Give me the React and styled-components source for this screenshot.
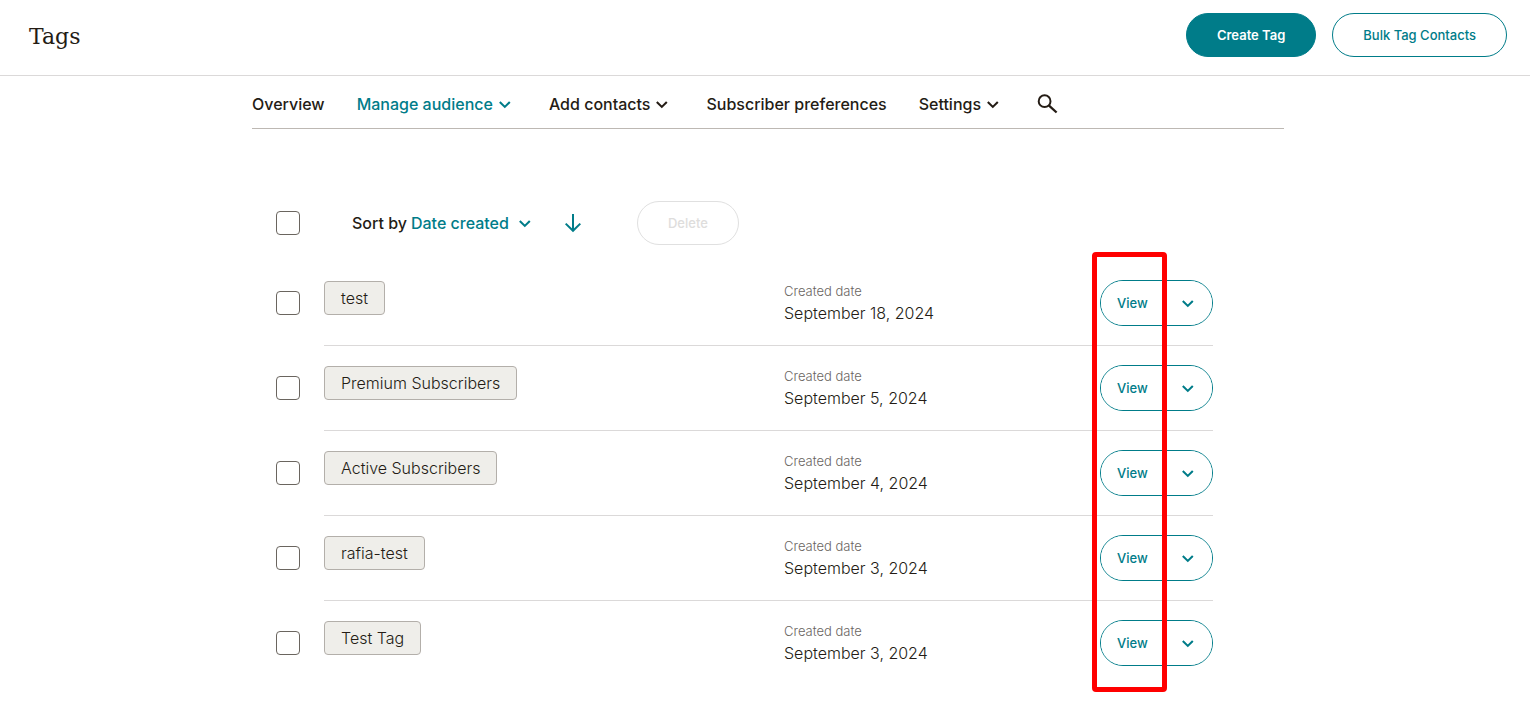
import React, { useState } from 'react';
import styled, { createGlobalStyle } from 'styled-components';

const TAGS = [
  { id: 1, name: 'test', created: 'September 18, 2024' },
  { id: 2, name: 'Premium Subscribers', created: 'September 5, 2024' },
  { id: 3, name: 'Active Subscribers', created: 'September 4, 2024' },
  { id: 4, name: 'rafia-test', created: 'September 3, 2024' },
  { id: 5, name: 'Test Tag', created: 'September 3, 2024' },
];

const NAV_ITEMS = [
  { label: 'Overview' },
  { label: 'Manage audience', menu: true, active: true },
  { label: 'Add contacts', menu: true },
  { label: 'Subscriber preferences' },
  { label: 'Settings', menu: true },
];

const Chevron = () => (
  <svg width="24" height="24" viewBox="0 0 24 24" aria-hidden="true">
    <path d="M6.8 10l5 4.9 5-4.9" fill="none" stroke="currentColor" strokeWidth="2.1" />
  </svg>
);

const SearchIcon = () => (
  <svg width="24" height="24" viewBox="0 0 24 24" aria-hidden="true">
    <g fill="none" stroke="currentColor" strokeWidth="2">
      <circle cx="7.6" cy="9.2" r="5.9" />
      <path d="M11.8 13.3l7.8 7.2" strokeWidth="2.3" />
    </g>
  </svg>
);

const ArrowDown = () => (
  <svg width="24" height="24" viewBox="0 0 24 24" aria-hidden="true">
    <path
      d="M12 3v17M4.7 12.6l7.3 7.2 7.3-7.2"
      fill="none"
      stroke="currentColor"
      strokeWidth="2"
    />
  </svg>
);

const App = () => {
  const [checked, setChecked] = useState([]);

  const toggleTag = id => {
    setChecked(
      checked.includes(id) ? checked.filter(el => el !== id) : [...checked, id]
    );
  };

  const toggleAll = e => {
    setChecked(e.target.checked ? TAGS.map(tag => tag.id) : []);
  };

  return (
    <>
      <GlobalStyle />
      <Header>
        <Title>Tags</Title>
        <HeaderButtons>
          <PillButton $primary>Create Tag</PillButton>
          <PillButton>Bulk Tag Contacts</PillButton>
        </HeaderButtons>
      </Header>
      <Main>
        <Container>
          <Nav>
            {NAV_ITEMS.map(({ label, menu, active }) => (
              <NavLink href="#" key={label} $active={active}>
                {label}
                {menu && <Chevron />}
              </NavLink>
            ))}
            <IconButton aria-label="Search">
              <SearchIcon />
            </IconButton>
          </Nav>
          <Content>
            <Toolbar>
              <Checkbox
                aria-label="Select all tags"
                checked={checked.length === TAGS.length}
                onChange={toggleAll}
              />
              <SortLabel htmlFor="sort">Sort by</SortLabel>
              <SelectWrap>
                <Select id="sort">
                  <option>Date created</option>
                </Select>
                <Chevron />
              </SelectWrap>
              <SortButton aria-label="Sort descending">
                <ArrowDown />
              </SortButton>
              <PillButton disabled={!checked.length}>Delete</PillButton>
            </Toolbar>
            <TagList>
              {TAGS.map(tag => (
                <TagItem key={tag.id}>
                  <Checkbox
                    aria-label={tag.name}
                    checked={checked.includes(tag.id)}
                    onChange={() => toggleTag(tag.id)}
                  />
                  <TagRow>
                    <div>
                      <TagName>{tag.name}</TagName>
                    </div>
                    <div>
                      <DateLabel>Created date</DateLabel>
                      <DateValue>{tag.created}</DateValue>
                    </div>
                    <SplitButton>
                      <ViewButton>View</ViewButton>
                      <MenuButton aria-label={`More actions for ${tag.name}`}>
                        <Chevron />
                      </MenuButton>
                    </SplitButton>
                  </TagRow>
                </TagItem>
              ))}
              <Highlight as="li" aria-hidden="true" />
            </TagList>
          </Content>
        </Container>
      </Main>
    </>
  );
};

export default App;

const GlobalStyle = createGlobalStyle`
  * {
    box-sizing: border-box;
  }
  body {
    margin: 0;
    background-color: white;
    color: #241c15;
    font-family: Inter, "Liberation Sans", sans-serif;
    font-size: 16px;
  }
  button, select {
    font-family: inherit;
    cursor: pointer;
  }
  svg {
    display: block;
    flex-shrink: 0;
  }
`;

const Header = styled.header`
  display: flex;
  justify-content: space-between;
  align-items: center;
  padding: 13px 23px 18px 29px;
  border-bottom: 1px solid #dbd9d9;
`;

const Title = styled.h1`
  margin: 0;
  padding-top: 4px;
  font-family: 'DejaVu Serif', serif;
  font-size: 22px;
  line-height: 28px;
  font-weight: 400;
`;

const HeaderButtons = styled.div`
  display: flex;
  gap: 16px;
`;

const PillButton = styled.button`
  height: 44px;
  padding: 0 30px;
  border: 1px solid #007c89;
  border-radius: 22px;
  background-color: ${props => (props.$primary ? '#007c89' : 'white')};
  color: ${props => (props.$primary ? 'white' : '#007c89')};
  font-size: 13px;
  font-weight: ${props => (props.$primary ? 600 : 500)};
  &:disabled {
    border-color: #e0e0e0;
    color: #dedddc;
    cursor: default;
  }
`;

const Main = styled.main`
  padding-left: 6px;
`;

const Container = styled.div`
  max-width: 1032px;
  margin: 0 auto;
`;

const Nav = styled.nav`
  display: flex;
  align-items: center;
  gap: 32px;
  padding: 16px 0 12px;
  border-bottom: 1px solid #bdb8b3;
`;

const NavLink = styled.a`
  display: flex;
  align-items: center;
  color: ${props => (props.$active ? '#007c89' : '#241c15')};
  font-weight: 500;
  line-height: 24px;
  text-decoration: none;
  white-space: nowrap;
`;

const IconButton = styled.button`
  padding: 0;
  border: none;
  background: none;
  color: #241c15;
`;

const Content = styled.div`
  padding: 72px 71px 24px 24px;
`;

const Toolbar = styled.div`
  display: flex;
  align-items: center;
  padding-bottom: 16px;
`;

const Checkbox = styled.input.attrs({ type: 'checkbox' })`
  appearance: none;
  flex-shrink: 0;
  width: 24px;
  height: 24px;
  margin: 0;
  border: 1px solid #6a655f;
  border-radius: 4px;
  background-color: white;
  &:checked {
    background-color: #007c89;
  }
`;

const SortLabel = styled.label`
  margin-left: 52px;
  font-weight: 500;
`;

const SelectWrap = styled.div`
  position: relative;
  margin-left: 4px;
  color: #007c89;
  svg {
    position: absolute;
    top: 0;
    right: 0;
    pointer-events: none;
  }
`;

const Select = styled.select`
  appearance: none;
  height: 24px;
  padding: 0 28px 0 0;
  border: none;
  background: none;
  color: inherit;
  font-size: 16px;
  font-weight: 500;
`;

const SortButton = styled(IconButton)`
  margin: 0 52px 0 24px;
  color: #007c89;
`;

const TagList = styled.ul`
  position: relative;
  margin: 0;
  padding: 0;
  list-style: none;
`;

const TagItem = styled.li`
  display: flex;
  align-items: center;
  gap: 24px;
  ${Checkbox} {
    margin-bottom: 2px;
  }
`;

const TagRow = styled.div`
  flex: 1;
  display: grid;
  grid-template-columns: 1fr 316px 113px;
  padding: 19px 0;
  border-bottom: 1px solid #dbd9d9;
  ${TagItem}:nth-last-child(2) & {
    border-bottom-color: transparent;
  }
`;

const TagName = styled.span`
  display: inline-block;
  margin-top: 1px;
  padding: 0 16px;
  border: 1px solid #b3afaa;
  border-radius: 4px;
  background-color: #efeeea;
  font-weight: 300;
  line-height: 32px;
`;

const DateLabel = styled.div`
  color: #6a655f;
  font-size: 13px;
  font-weight: 300;
  line-height: 22px;
`;

const DateValue = styled.div`
  font-weight: 300;
  line-height: 22px;
`;

const SplitButton = styled.div`
  display: flex;
  height: 46px;
  border: 1px solid #007c89;
  border-radius: 23px;
  overflow: hidden;
`;

const ViewButton = styled.button`
  padding: 0 16px;
  border: none;
  background-color: white;
  color: #007c89;
  font-size: 13px;
  font-weight: 500;
`;

const MenuButton = styled.button`
  flex: 1;
  display: flex;
  justify-content: center;
  align-items: center;
  padding: 0;
  border: none;
  background-color: white;
  color: #007c89;
`;

/* frame drawn over the column of View buttons */
const Highlight = styled.div`
  position: absolute;
  top: -9px;
  right: 46px;
  bottom: -6px;
  width: 75px;
  border: 5px solid #ff0000;
  border-radius: 4px;
  pointer-events: none;
`;
